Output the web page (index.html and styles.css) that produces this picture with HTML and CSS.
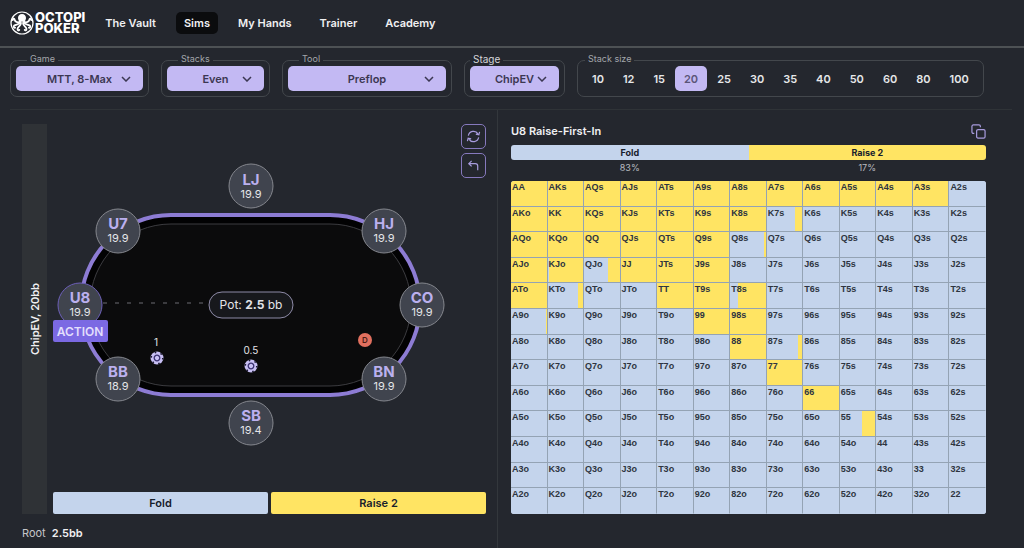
FILE: index.html
```html
<!DOCTYPE html>
<html lang="en">
<head>
    <meta charset="UTF-8">
    <meta name="viewport" content="width=device-width, initial-scale=1">
    <title>Octopi Poker</title>
    <link rel="stylesheet" href="styles.css">
</head>
<body>
    <header class="topbar">
        <a class="logo" href="#">
            <svg class="logo-mark" viewBox="0 0 24 24" aria-hidden="true">
                <circle cx="12" cy="12" r="11" fill="none" stroke="#fff" stroke-width="1.2"/>
                <path d="M12 3c-2.600 0-4 1.800-4 4 0 1.600.9 2.500 1.300 3.800h5.400C15.100 9.500 16 8.600 16 7c0-2.200-1.400-4-4-4z" fill="#fff"/>
                <g fill="none" stroke="#fff" stroke-width="1.800" stroke-linecap="round">
                    <path d="M10 10c-1 2.500-5 1-5.500-1.500-.3-1.600-2-1-1.800.6"/>
                    <path d="M14 10c1 2.500 5 1 5.500-1.500.3-1.600 2-1 1.800.6"/>
                    <path d="M10.300 11c-1 3-4.300 2-6 3.500-1.200 1.200-.4 2.800.8 2.200"/>
                    <path d="M13.700 11c1 3 4.300 2 6 3.500 1.200 1.200.4 2.800-.8 2.200"/>
                    <path d="M11 12c0 3-3.500 3.500-3.500 6 0 1.500 1.500 1.800 1.800.8"/>
                    <path d="M13 12c0 3 3.500 3.500 3.500 6 0 1.500-1.500 1.800-1.800.8"/>
                </g>
            </svg>
            <span class="logo-text">OCTOPI<br>POKER</span>
        </a>
        <nav class="nav">
            <a href="#">The Vault</a>
            <a href="#" class="active">Sims</a>
            <a href="#">My Hands</a>
            <a href="#">Trainer</a>
            <a href="#">Academy</a>
        </nav>
    </header>

    <form class="filters">
        <fieldset class="filter filter-game">
            <legend><label for="game">Game</label></legend>
            <div class="select">
                <select id="game"><option>MTT, 8-Max</option></select>
                <svg viewBox="0 0 10 6" aria-hidden="true"><path d="M1 1l4 4 4-4"/></svg>
            </div>
        </fieldset>
        <fieldset class="filter filter-stacks">
            <legend><label for="stacks">Stacks</label></legend>
            <div class="select">
                <select id="stacks"><option>Even</option></select>
                <svg viewBox="0 0 10 6" aria-hidden="true"><path d="M1 1l4 4 4-4"/></svg>
            </div>
        </fieldset>
        <fieldset class="filter filter-tool">
            <legend><label for="tool">Tool</label></legend>
            <div class="select">
                <select id="tool"><option>Preflop</option></select>
                <svg viewBox="0 0 10 6" aria-hidden="true"><path d="M1 1l4 4 4-4"/></svg>
            </div>
        </fieldset>
        <fieldset class="filter filter-stage">
            <legend><label for="stage">Stage</label></legend>
            <div class="select">
                <select id="stage"><option>ChipEV</option></select>
                <svg viewBox="0 0 10 6" aria-hidden="true"><path d="M1 1l4 4 4-4"/></svg>
            </div>
        </fieldset>
        <fieldset class="filter filter-size">
            <legend>Stack size</legend>
            <div class="sizes">
                <button type="button">10</button>
                <button type="button">12</button>
                <button type="button">15</button>
                <button type="button" class="active">20</button>
                <button type="button">25</button>
                <button type="button">30</button>
                <button type="button">35</button>
                <button type="button">40</button>
                <button type="button">50</button>
                <button type="button">60</button>
                <button type="button">80</button>
                <button type="button">100</button>
            </div>
        </fieldset>
    </form>

    <main class="main">
        <section class="panel table-panel">
            <div class="table-row">
                <div class="spine"><span>ChipEV, 20bb</span></div>
                <div class="stage">
                    <svg class="felt" viewBox="0 0 433 364" role="img" aria-label="Poker table">
                        <defs>
                            <g id="chip">
                                <circle r="6.500" fill="#c9c0f5"/>
                                <circle r="5.800" fill="none" stroke="#1a1730" stroke-width="1.600" stroke-dasharray="1.600 4.470"/>
                                <circle r="2.800" fill="none" stroke="#3a3170" stroke-width="1.300"/>
                            </g>
                        </defs>
                        <rect x="28" y="91" width="339" height="180" rx="90" fill="#020203" stroke="#8d7cd4" stroke-width="4"/>
                        <rect x="37" y="100" width="321" height="162" rx="81" fill="#0b0b0c" stroke="#3c3c40"/>
                        <path class="dash" d="M50 179h104"/>

                        <rect class="pot" x="156" y="168" width="84" height="26" rx="13"/>
                        <text class="pot-text" x="198" y="185">Pot: <tspan class="bold">2.5</tspan> bb</text>

                        <g class="seat"><circle cx="198" cy="62" r="22"/><text class="pos" x="198" y="61">LJ</text><text class="chips" x="198" y="74">19.9</text></g>
                        <g class="seat"><circle cx="331" cy="107" r="22"/><text class="pos" x="331" y="105">HJ</text><text class="chips" x="331" y="118">19.9</text></g>
                        <g class="seat"><circle cx="369" cy="181" r="22"/><text class="pos" x="369" y="179">CO</text><text class="chips" x="369" y="192">19.9</text></g>
                        <g class="seat"><circle cx="331" cy="255" r="22"/><text class="pos" x="331" y="253">BN</text><text class="chips" x="331" y="266">19.9</text></g>
                        <g class="seat"><circle cx="198" cy="299" r="22"/><text class="pos" x="198" y="297">SB</text><text class="chips" x="198" y="310">19.4</text></g>
                        <g class="seat"><circle cx="65" cy="255" r="22"/><text class="pos" x="65" y="253">BB</text><text class="chips" x="65" y="266">18.9</text></g>
                        <g class="seat"><circle cx="65" cy="107" r="22"/><text class="pos" x="65" y="105">U7</text><text class="chips" x="65" y="118">19.9</text></g>
                        <g class="seat to-act"><circle cx="27" cy="181" r="22"/><text class="pos" x="27" y="179">U8</text><text class="chips" x="27" y="192">19.9</text></g>

                        <rect x="0" y="196" width="55" height="22" rx="2" fill="#7b69e3"/>
                        <text class="action-text" x="27" y="212">ACTION</text>

                        <text class="bet" x="103" y="222">1</text>
                        <use href="#chip" x="104" y="234"/>
                        <text class="bet" x="198" y="230">0.5</text>
                        <use href="#chip" x="198" y="242"/>
                        <circle cx="312" cy="216" r="7" fill="#e2705f"/>
                        <text class="dealer" x="312" y="219">D</text>
                    </svg>
                    <div class="tools">
                        <button type="button" aria-label="Restart">
                            <svg viewBox="0 0 16 16" aria-hidden="true"><path d="M2.500 7A5.600 5.600 0 0 1 12.800 5.200M13.500 9A5.600 5.600 0 0 1 3.200 10.800M14.500 3l-.8 3.200-3.200-.8M1.500 13l.8-3.200 3.200.8"/></svg>
                        </button>
                        <button type="button" aria-label="Undo">
                            <svg viewBox="0 0 16 16" aria-hidden="true"><path d="M6 3L3 6l3 3M3 6h7c1.500 0 2.500 1 2.500 2.500V13"/></svg>
                        </button>
                    </div>
                </div>
                <div class="actions">
                    <button type="button" class="fold">Fold</button>
                    <button type="button" class="raise">Raise 2</button>
                </div>
            </div>
            <p class="history">Root <b>2.5bb</b></p>
        </section>

        <section class="panel range-panel">
            <div class="range-head">
                <h1>U8 Raise-First-In</h1>
                <button type="button" class="copy" aria-label="Copy range">
                    <svg viewBox="0 0 16 16" aria-hidden="true"><rect x="6" y="6" width="9" height="9" rx="1.500"/><path d="M3.500 10H2.500A1.500 1.500 0 0 1 1 8.500v-6A1.500 1.500 0 0 1 2.500 1h6A1.500 1.500 0 0 1 10 2.500V3.500"/></svg>
                </button>
            </div>
            <div class="summary">
                <div class="summary-item"><div class="fold">Fold</div><span>83%</span></div>
                <div class="summary-item"><div class="raise">Raise 2</div><span>17%</span></div>
            </div>
            <table class="matrix"><tbody id="matrix"></tbody></table>
        </section>
    </main>
    <script src="script.js"></script>
</body>
</html>
```
FILE: styles.css
```css
* {
    box-sizing: border-box;
}
body {
    margin: 0;
    min-height: 100vh;
    display: flex;
    flex-direction: column;
    background: #24272e;
    color: #f0f0f2;
    font-family: Inter, sans-serif;
    font-size: 11px;
}
button, select {
    font-family: inherit;
    border: 0;
    cursor: pointer;
}
a {
    color: inherit;
    text-decoration: none;
}

/* top bar */
.topbar {
    display: flex;
    align-items: center;
    gap: 12px;
    height: 48px;
    padding: 0 10px;
    border-bottom: 2px solid #4d5154;
}
.logo {
    display: flex;
    align-items: center;
    gap: 1px;
    color: #fff;
}
.logo-mark {
    width: 24px;
    height: 24px;
}
.logo-text {
    font-size: 13px;
    font-weight: 800;
    line-height: 11px;
}
.nav {
    display: flex;
    gap: 12px;
    font-size: 11px;
    font-weight: 600;
}
.nav a {
    padding: 0 8px;
    line-height: 22px;
    border-radius: 5px;
}
.nav a.active {
    background: #0b0c0e;
}

/* filters */
.filters {
    display: flex;
    gap: 12px;
    margin: 0 12px 0 10px;
    padding: 6px 0 12px;
    border-bottom: 1px solid #2f3337;
}
.filter {
    min-width: 0;
    margin: 0;
    padding: 0 5px 5px;
    border: 1px solid #43474c;
    border-radius: 7px;
}
.filter legend {
    margin-left: 11px;
    padding: 0 3px 2px;
    font-size: 9px;
    line-height: 10px;
    color: #a3a6ab;
}
.filter-game {
    width: 139px;
}
.filter-stacks {
    width: 109px;
}
.filter-tool {
    width: 170px;
}
.filter-stage {
    width: 101px;
}
.filter-stage legend {
    margin-left: 0;
    font-size: 10px;
    color: #d4d5d8;
}
.filter-size legend {
    margin-left: 2px;
}
.select {
    position: relative;
}
.select select {
    appearance: none;
    display: block;
    width: 100%;
    height: 25px;
    padding: 0;
    border-radius: 5px;
    background: #c3b9f3;
    color: #3b3752;
    font-size: 11px;
    font-weight: 600;
    text-align: center;
    text-align-last: center;
}
.select svg {
    position: absolute;
    right: 12px;
    top: 10px;
    width: 10px;
    height: 6px;
    pointer-events: none;
    fill: none;
    stroke: #3b3752;
    stroke-width: 1.5;
}
.sizes {
    display: flex;
    gap: 1px;
}
.sizes button {
    height: 25px;
    padding: 0 9px;
    border-radius: 5px;
    background: none;
    color: #e6e7e9;
    font-size: 11px;
    font-weight: 600;
}
.sizes button.active {
    background: #c3b9f3;
    color: #5a5478;
}

/* main */
.main {
    flex: 1;
    display: grid;
    grid-template-columns: 498fr 526fr;
}
.panel {
    display: flex;
    flex-direction: column;
}
.table-panel {
    padding: 14px 11px 0 22px;
    border-right: 1px solid #33373c;
}
.table-row {
    display: grid;
    grid-template-columns: 25px 1fr;
    grid-template-rows: 1fr 22px;
    gap: 4px 6px;
}
.spine {
    grid-row: span 2;
    display: flex;
    align-items: center;
    justify-content: center;
    background: #2f3236;
    font-size: 11px;
    font-weight: 600;
}
.spine span {
    writing-mode: vertical-rl;
    transform: rotate(180deg);
}
.stage {
    position: relative;
}
.felt {
    display: block;
    width: 100%;
}
.felt text {
    text-anchor: middle;
    fill: #e4e4e8;
}
.dash {
    stroke: #6d6d72;
    stroke-dasharray: 4 8;
}
.pot {
    fill: #17181c;
    stroke: #8d8aa6;
}
.pot-text {
    font-size: 12px;
}
.bold {
    font-weight: 700;
}
.seat circle {
    fill: #40444e;
    stroke: #85878e;
}
.seat.to-act circle {
    stroke: #6c5fb8;
}
.felt .pos {
    font-size: 15px;
    font-weight: 700;
    fill: #bbb0ee;
}
.chips {
    font-size: 11px;
}
.felt .action-text {
    font-size: 12px;
    font-weight: 600;
    fill: #e2defc;
}
.bet {
    font-size: 10px;
}
.felt .dealer {
    font-size: 8px;
    font-weight: 600;
    fill: #4a1c16;
}
.tools {
    position: absolute;
    top: 0;
    right: 0;
    display: flex;
    flex-direction: column;
    gap: 4px;
}
.tools button {
    width: 25px;
    height: 25px;
    padding: 4px;
    border: 1px solid #8679bd;
    border-radius: 5px;
    background: none;
}
.tools svg, .copy svg {
    display: block;
    width: 15px;
    height: 15px;
    fill: none;
    stroke: #a79bdc;
    stroke-width: 1.3;
}
.actions {
    display: grid;
    grid-template-columns: 1fr 1fr;
    gap: 3px;
}
.actions button {
    border-radius: 2px;
    font-size: 11px;
    font-weight: 600;
    color: #17202c;
}
.fold {
    background: #c4d4ec;
}
.raise {
    background: #ffe463;
}
.history {
    margin: 12px 0 0;
    line-height: 14px;
    color: #c4c6ca;
}
.history b {
    margin-left: 3px;
    font-weight: 600;
    color: #f0f0f2;
}

/* range */
.range-panel {
    padding: 13px 38px 0 13px;
}
.range-head {
    display: flex;
    align-items: center;
    justify-content: space-between;
    height: 16px;
}
.range-head h1 {
    margin: 0;
    font-size: 11px;
    font-weight: 600;
}
.copy {
    padding: 0;
    background: none;
}
.summary {
    display: grid;
    grid-template-columns: 1fr 1fr;
    margin: 6px 0;
    text-align: center;
    font-size: 9px;
    line-height: 15px;
}
.summary-item div {
    color: #17202c;
    font-weight: 700;
}
.summary-item .fold {
    border-radius: 3px 0 0 3px;
}
.summary-item .raise {
    border-radius: 0 3px 3px 0;
}
.summary-item span {
    color: #b9bbc0;
}
.matrix {
    width: 100%;
    height: 333px;
    table-layout: fixed;
    border-collapse: separate;
    border-spacing: 0;
    border-radius: 3px;
    overflow: hidden;
    background: #c4d4ec;
}
.matrix td {
    padding: 1px;
    border-right: 1px solid #94a3b4;
    border-bottom: 1px solid #94a3b4;
    background: linear-gradient(90deg, #c4d4ec var(--fold), #ffe463 var(--fold));
    color: #2e3440;
    font-family: "Liberation Sans", sans-serif;
    font-size: 9px;
    font-weight: 700;
    line-height: 11px;
    vertical-align: top;
}
.matrix td:last-child {
    border-right-color: transparent;
}
.matrix tr:last-child td {
    border-bottom-color: transparent;
}
```
FILE: script.js
```js
const ranks = "AKQJT98765432";

// hands that always raise
const raises = new Set([
    "AA", "AKs", "AQs", "AJs", "ATs", "A9s", "A8s", "A7s", "A6s", "A5s", "A4s", "A3s",
    "AKo", "KK", "KQs", "KJs", "KTs", "K9s", "K8s",
    "AQo", "KQo", "QQ", "QJs", "QTs", "Q9s",
    "AJo", "JJ", "JTs", "J9s",
    "ATo", "TT", "T9s",
    "99", "98s", "88", "77", "66"
]);

// mixed hands, fold frequency in percent
const mixed = {
    "KJo": 4, "QJo": 66, "KTo": 86, "A9o": 97, "T8s": 21,
    "K7s": 81, "Q8s": 94, "87s": 88, "55": 63
};

function handName(row, col) {
    if (row == col) {
        return ranks[row] + ranks[row];
    }
    return row < col ? ranks[row] + ranks[col] + "s" : ranks[col] + ranks[row] + "o";
}

const matrix = document.getElementById("matrix");
for (let row = 0; row < ranks.length; row++) {
    const tr = matrix.insertRow();
    for (let col = 0; col < ranks.length; col++) {
        const hand = handName(row, col);
        const td = tr.insertCell();
        td.textContent = hand;
        td.style.setProperty("--fold", (raises.has(hand) ? 0 : mixed[hand] ?? 100) + "%");
    }
}
```
